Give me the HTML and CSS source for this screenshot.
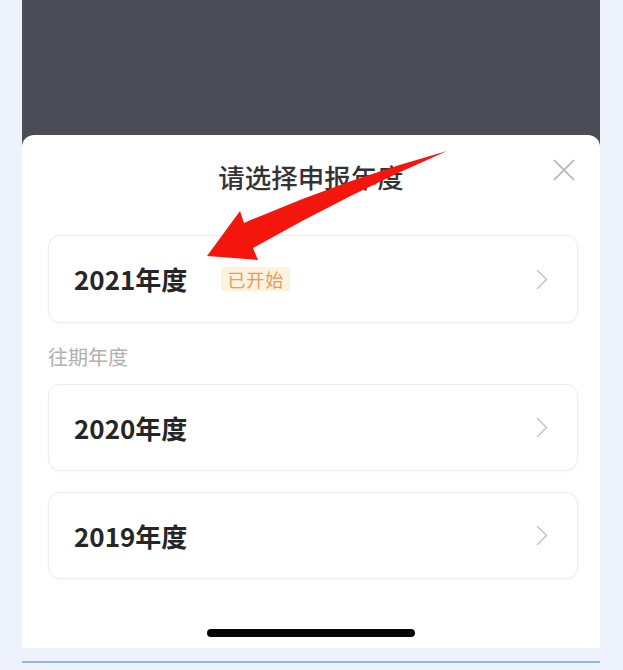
FILE: index.html
```html
<!DOCTYPE html>
<html lang="zh-CN">
<head>
<meta charset="utf-8">
<title>请选择申报年度</title>
<link rel="stylesheet" href="styles.css">
</head>
<body>
<div class="page">
  <div class="screen">
    <div class="dim"></div>
    <div class="sheet">
      <div class="header">
        <span></span>
        <h1 class="title">请选择申报年度</h1>
        <span class="close">
          <svg width="22" height="22" viewBox="0 0 22 22"><path d="M1.5 1.5 L20.5 20.5 M20.5 1.5 L1.5 20.5" stroke="#bdbdbd" stroke-width="1.8" fill="none" stroke-linecap="round"/></svg>
        </span>
      </div>
      <div class="list">
        <div class="card first">
          <span class="year">2021年度</span>
          <span class="tag">已开始</span>
          <svg class="chev" width="12" height="21" viewBox="0 0 12 21"><polyline points="1.5,1.5 10.5,10.5 1.5,19.5" stroke="#c6c6c6" stroke-width="1.6" fill="none" stroke-linecap="round" stroke-linejoin="round"/></svg>
        </div>
        <div class="label">往期年度</div>
        <div class="card">
          <span class="year">2020年度</span>
          <svg class="chev" width="12" height="21" viewBox="0 0 12 21"><polyline points="1.5,1.5 10.5,10.5 1.5,19.5" stroke="#c6c6c6" stroke-width="1.6" fill="none" stroke-linecap="round" stroke-linejoin="round"/></svg>
        </div>
        <div class="card">
          <span class="year">2019年度</span>
          <svg class="chev" width="12" height="21" viewBox="0 0 12 21"><polyline points="1.5,1.5 10.5,10.5 1.5,19.5" stroke="#c6c6c6" stroke-width="1.6" fill="none" stroke-linecap="round" stroke-linejoin="round"/></svg>
        </div>
      </div>
      <div class="home"></div>
    </div>
  </div>
  <div class="rule"></div>
  <svg class="arrow" width="623" height="670" viewBox="0 0 623 670">
    <path d="M207 256 L240 211 L244 223 Q345.5 179 447 151 Q350 193 253 248 L258 260 Z" fill="#f4150c"/>
  </svg>
</div>
</body>
</html>
```

FILE: styles.css
```css
html, body {
  margin: 0;
  padding: 0;
}
body {
  background: #eef2fd;
  font-family: "Noto Sans CJK SC", "Noto Sans", sans-serif;
  width: 623px;
  height: 670px;
  overflow: hidden;
}
.page {
  position: relative;
  width: 623px;
  height: 670px;
}
.screen {
  margin-left: 22px;
  width: 578px;
  background: #4a4d58;
}
.dim {
  height: 135px;
}
.sheet {
  background: #ffffff;
  border-radius: 12px 12px 0 0;
  height: 513px;
  display: flex;
  flex-direction: column;
  box-sizing: border-box;
}
.header {
  display: grid;
  grid-template-columns: 1fr auto 1fr;
  padding: 24px 25px 0 25px;
  height: 60px;
  box-sizing: border-box;
}
.title {
  margin: 0;
  font-size: 26.5px;
  line-height: 36px;
  font-weight: 500;
  color: #333333;
}
.close {
  justify-self: end;
  width: 22px;
  height: 22px;
  display: block;
}
.close svg {
  display: block;
}
.list {
  display: flex;
  flex-direction: column;
  padding: 40px 22px 0 26px;
}
.card {
  height: 87px;
  box-sizing: border-box;
  border: 1px solid #ececec;
  border-radius: 12px;
  box-shadow: 0 1px 3px rgba(0, 0, 0, 0.04);
  display: flex;
  align-items: center;
  padding: 0 29px 0 25px;
  margin-bottom: 21px;
}
.card.first {
  height: 88px;
  margin-bottom: 0;
}
.year {
  font-size: 26px;
  font-weight: 700;
  color: #262626;
  line-height: 30px;
}
.tag {
  margin-left: 34px;
  height: 24px;
  line-height: 24px;
  padding: 0 6px;
  background: #fcf2de;
  color: #e89a5c;
  font-size: 18px;
  letter-spacing: 1px;
  border-radius: 2px;
}
.chev {
  margin-left: auto;
  display: block;
}
.label {
  font-size: 20px;
  line-height: 26px;
  color: #b0b0b0;
  margin: 21px 0 14px 0;
}
.home {
  margin: auto auto 11px auto;
  width: 208px;
  height: 8px;
  border-radius: 4px;
  background: #050505;
}
.rule {
  margin: 13px 0 0 22px;
  width: 578px;
  height: 2px;
  background: #8fb6ef;
}
.arrow {
  position: absolute;
  left: 0;
  top: 0;
  pointer-events: none;
}
```
